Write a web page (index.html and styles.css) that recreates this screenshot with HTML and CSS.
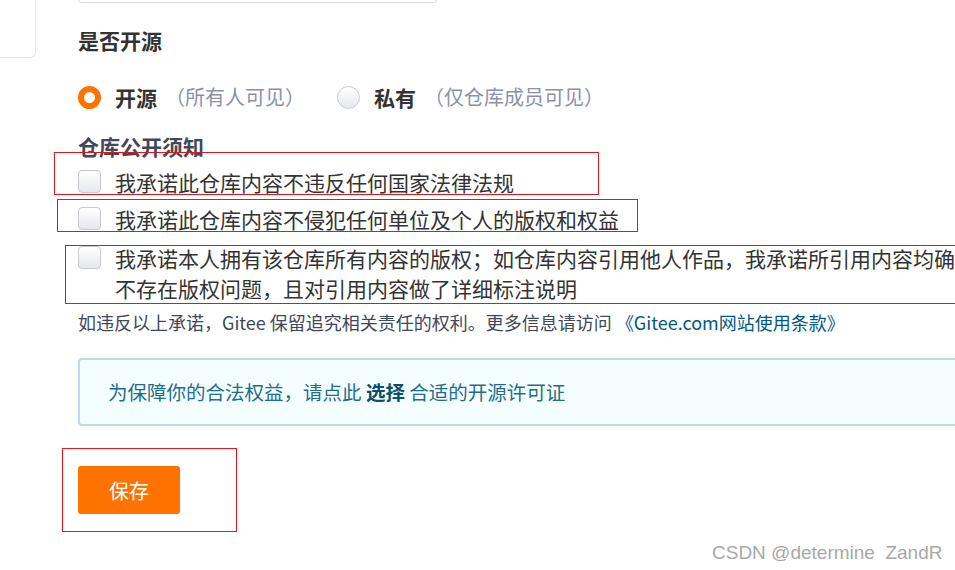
FILE: index.html
```html
<!DOCTYPE html>
<html lang="zh-CN">
<head>
  <meta charset="UTF-8">
  <meta name="viewport" content="width=device-width, initial-scale=1.0">
  <title>仓库设置</title>
  <link rel="stylesheet" href="styles.css">
</head>
<body>

  <div class="page">
    <div class="side"></div>

    <div class="main">
      <div class="top-input"></div>

      <h3 class="field-title">是否开源</h3>

      <div class="radio-row">
        <label class="radio-item">
          <span class="radio checked"></span>
          <b>开源</b>
          <span class="hint">（所有人可见）</span>
        </label>
        <label class="radio-item">
          <span class="radio"></span>
          <b>私有</b>
          <span class="hint">（仅仓库成员可见）</span>
        </label>
      </div>

      <h4 class="notice-title">仓库公开须知</h4>

      <label class="check-item first">
        <span class="checkbox"></span>
        <span>我承诺此仓库内容不违反任何国家法律法规</span>
      </label>
      <label class="check-item second">
        <span class="checkbox"></span>
        <span>我承诺此仓库内容不侵犯任何单位及个人的版权和权益</span>
      </label>
      <label class="check-item third">
        <span class="checkbox"></span>
        <span>我承诺本人拥有该仓库所有内容的版权；如仓库内容引用他人作品，我承诺所引用内容均确<br>不存在版权问题，且对引用内容做了详细标注说明</span>
      </label>

      <p class="notice">如违反以上承诺，Gitee 保留追究相关责任的权利。更多信息请访问 <a href="#">《Gitee.com网站使用条款》</a></p>

      <div class="info-box">
        为保障你的合法权益，请点此 <b>选择</b> 合适的开源许可证
      </div>

      <button class="save-btn">保存</button>
    </div>

    <!-- annotation boxes -->
    <div class="mark mark-1"></div>
    <div class="mark mark-2"></div>
    <div class="mark mark-3"></div>
    <div class="mark mark-4"></div>

    <div class="watermark">CSDN @determine  ZandR</div>
  </div>

</body>
</html>
```

FILE: styles.css
```css
body {
  margin: 0;
  background: #ffffff;
  font-family: "Noto Sans CJK SC", "Liberation Sans", sans-serif;
  color: #333333;
  overflow: hidden;
}

.page {
  position: relative;
  display: flex;
  align-items: flex-start;
  width: 955px;
  height: 570px;
  overflow: hidden;
}

.side {
  flex: none;
  width: 35px;
  height: 57px;
  border-right: 1px solid #e5e5ea;
  border-bottom: 1px solid #e5e5ea;
  border-bottom-right-radius: 6px;
}

.main {
  flex: none;
  width: 960px;
  padding-left: 42px;
}

.top-input {
  width: 357px;
  height: 2px;
  border: 1px solid #dcdce4;
  border-top: none;
  border-radius: 0 0 4px 4px;
}

.field-title {
  margin: 22px 0 0;
  font-size: 21px;
  line-height: 30px;
  font-weight: bold;
  color: #333333;
}

.radio-row {
  display: flex;
  margin-top: 27px;
  height: 30px;
  gap: 32px;
}

.radio-item {
  display: flex;
  align-items: center;
  font-size: 21px;
  line-height: 30px;
}

.radio-item b {
  margin-left: 14px;
  color: #333333;
}

.hint {
  margin-left: 8px;
  font-size: 20px;
  color: #8c92a4;
}

.radio {
  box-sizing: border-box;
  width: 23px;
  height: 23px;
  border-radius: 50%;
  border: 1px solid #c8cad2;
  background: linear-gradient(#ffffff, #e6e7ec);
}

.radio.checked {
  border: 6px solid #fe7300;
  background: #ffffff;
}

.notice-title {
  margin: 19px 0 0;
  font-size: 21px;
  line-height: 30px;
  font-weight: bold;
  color: #40485b;
}

.check-item {
  display: flex;
  align-items: flex-start;
  gap: 14px;
  font-size: 21px;
  line-height: 30px;
  color: #333333;
}

.check-item.first { margin-top: 6px; }
.check-item.second { margin-top: 7px; }
.check-item.third { margin-top: 9px; }

.checkbox {
  flex: none;
  box-sizing: border-box;
  width: 23px;
  height: 23px;
  margin-top: 3px;
  border: 1px solid #c8cad2;
  border-radius: 4px;
  background: linear-gradient(#ffffff, #e6e7ec);
}

.notice {
  margin: 7px 0 0;
  font-size: 18px;
  line-height: 24px;
  color: #40485b;
}

.notice a {
  color: #005980;
  text-decoration: none;
}

.info-box {
  margin-top: 24px;
  width: 900px;
  padding: 18px 28px;
  border: 2px solid #bcdde6;
  border-radius: 4px;
  background: #f5feff;
  font-size: 19.5px;
  line-height: 28px;
  color: #1f6d8a;
}

.info-box b {
  color: #0b4f6c;
}

.save-btn {
  display: block;
  margin-top: 40px;
  width: 102px;
  height: 48px;
  border: none;
  border-radius: 3px;
  background: #fe7300;
  color: #ffffff;
  font-family: inherit;
  font-size: 20px;
}

.mark {
  position: absolute;
  border: 1px solid #e8141c;
}

.mark-1 { left: 54px; top: 152px; width: 543px; height: 41px; }
.mark-2 { left: 57px; top: 199px; width: 579px; height: 31px; }
.mark-3 { left: 65px; top: 245px; width: 900px; height: 57px; }
.mark-4 { left: 62px; top: 448px; width: 173px; height: 82px; }

.watermark {
  position: absolute;
  left: 712px;
  top: 542px;
  font-family: "Liberation Sans", sans-serif;
  font-size: 19px;
  color: #a8a8a8;
  white-space: pre;
}
```
